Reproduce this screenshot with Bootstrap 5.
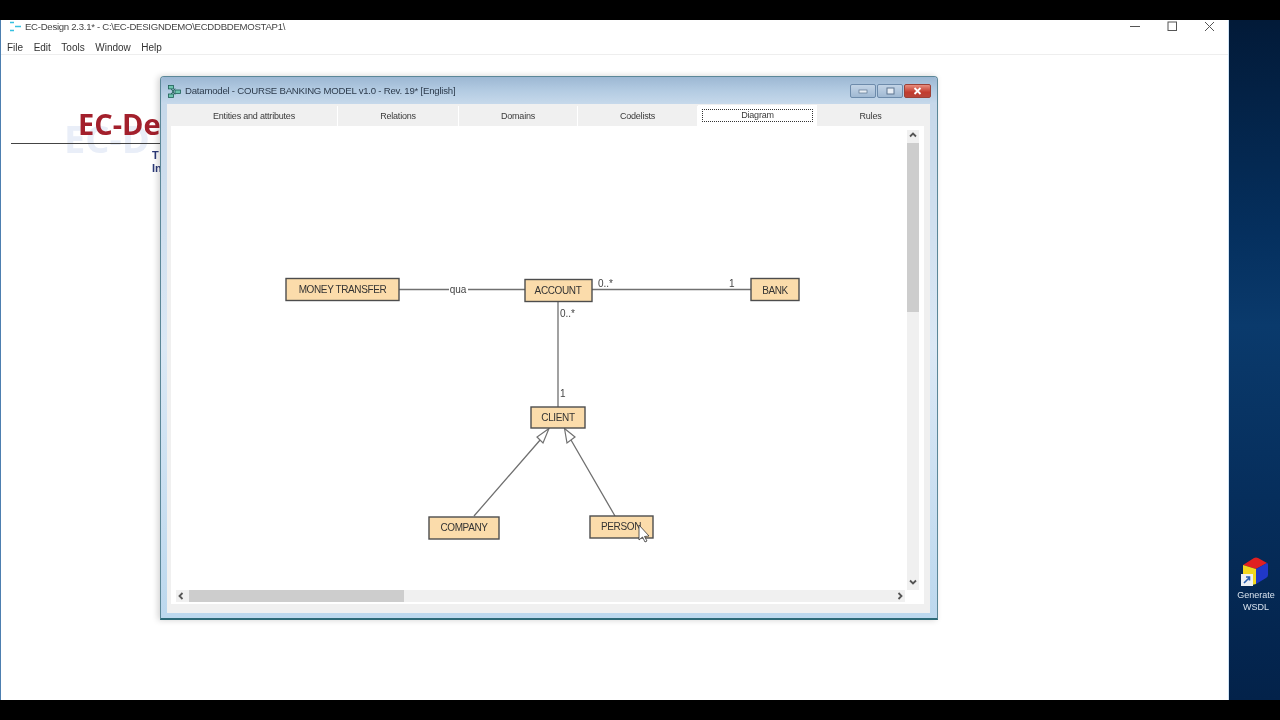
<!DOCTYPE html>
<html lang="en">
<head>
    <meta charset="UTF-8">
    <title>EC-Design</title>
    <link rel="stylesheet" href="https://cdn.jsdelivr.net/npm/bootstrap@5.3.0/dist/css/bootstrap.min.css">
    <style>
        html, body { height: 720px; overflow: hidden; }
        body { background: #000; font-family: "Liberation Sans", Arial, sans-serif; color: #333; }
        .screen { height: 720px; padding: 20px 0; }
        .stage { height: 680px; position: relative; filter: blur(.35px); }
        .app-win { width: 1229px; background: #fff; border-left: 1px solid #4d7fb0; border-right: 1px solid #cfe3f5; }
        .app-title-bar { height: 14px; padding-left: 7px; padding-right: 13px; font-size: 9.6px; letter-spacing: -.28px; line-height: 13px; color: #444; }
        .app-title-bar svg { flex: none; }
        .app-controls { gap: 26px; }
        .menu-wrap { height: 22px; padding-top: 9px; border-bottom: 1px solid #eeeeee; }
        .app-menu { gap: 10.5px; padding-left: 6px; font-size: 10px; line-height: 12px; color: #333; }
        .app-body { position: relative; height: 100%; }
        .logo-red { position: absolute; left: 78px; top: 84px; font-family: "Open Sans", sans-serif; font-weight: 700; font-size: 29px; line-height: 40px; color: #a3202c; white-space: nowrap; }
        .logo-ghost { position: absolute; left: 64px; top: 93px; font-family: "Open Sans", sans-serif; font-weight: 700; font-size: 38px; line-height: 50px; color: #e9eef8; white-space: nowrap; }
        .logo-rule { position: absolute; left: 11px; top: 123px; width: 150px; height: 1px; background: #444; }
        .logo-sub { position: absolute; left: 152px; top: 129px; font-size: 11px; line-height: 13px; font-weight: 700; color: #2c3a78; }
        .desktop { width: 51px; padding-left: 3px; background: linear-gradient(180deg, #021a38 0%, #05305f 32%, #0a3a6c 45%, #062e5c 70%, #03224a 100%); }
        .shortcut { margin-top: 535px; font-size: 9px; line-height: 12px; color: #d8e2ee; text-align: center; }
        .shortcut svg { display: block; margin: 0 0 1px 8px; }

        .dm-window { position: absolute; left: 160px; top: 56px; width: 778px; height: 544px; border: 1px solid #5b8798; border-bottom: 2px solid #2c6a78; border-radius: 4px 4px 0 0; background: linear-gradient(180deg, #c4d6e8 0%, #dbe8f5 50%, #bcd8ee 100%); box-shadow: -2px 0 6px rgba(0,0,0,.18); padding: 0 7px 6px 6px; }
        .dm-title { height: 27px; font-size: 9.6px; letter-spacing: -.22px; color: #2d3b4c; margin: 0 -7px 0 -6px; padding: 2px 6px 0 7px; background: linear-gradient(180deg, #9cb7d3 0%, #b3cbe2 50%, #c7d9eb 100%); border-radius: 3px 3px 0 0; }
        .dm-title svg { flex: none; }
        .ctl-btn { width: 26px; height: 14px; border: 1px solid #6d8bab; border-radius: 2px; background: linear-gradient(180deg, #c3d4e6, #a0b9d3); }
        .ctl-btn.ctl-close { border-color: #9c4036; background: linear-gradient(180deg, #e88e7e, #c23b2e 60%, #b8453a); color: #fff; width: 27px; }
        .ctl-group { gap: 1px; margin-top: -2px; }
        .dm-inner { background: #f0f0f0; padding: 2px 5px 9px 4px; height: 515px; }
        .dm-tabs { height: 20px; font-size: 9px; letter-spacing: -.2px; color: #3a3a3a; }
        .dm-tab { height: 20px; border-right: 1px solid #fff; background: #f0f0f0; text-align: center; line-height: 20px; }
        .tab-a { width: 167px; } .tab-b { width: 121px; } .tab-c { width: 119px; } .tab-d { width: 120px; } .tab-f { width: 107px; border-right: 0; }
        .tab-e { width: 119px; background: #fff; padding: 4px 4px 0; margin-top: -1px; height: 21px; line-height: 11px; border-right: 0; }
        .tab-focus { border: 1px dotted #333; height: 13px; line-height: 10px; }
        .dm-panel { background: #fff; height: 478px; width: 753px; padding: 4px 5px 2px 5px; }
        .sb-v { width: 12px; height: 460px; background: #f0f0f0; }
        .sb-h { width: 729px; height: 12px; background: #f0f0f0; }
        .sb-v-thumb { width: 12px; height: 169px; margin-top: 3px; background: #cdcdcd; }
        .sb-h-thumb { width: 215px; height: 12px; margin-left: 3px; background: #cdcdcd; }
        .sb-btn { flex: none; display: block; }
        .sb-down { margin-bottom: 3px; }
        .canvas { width: 731px; height: 460px; display: block; flex: none; }
        .canvas text { font-family: "Liberation Sans", Arial, sans-serif; font-size: 10px; letter-spacing: -.38px; fill: #333; }
        .canvas .lbl { font-size: 10px; letter-spacing: 0; fill: #444; }
        .canvas .nd { fill: #fbdcab; stroke: #4d4d4d; stroke-width: 1.4; }
        .canvas .ln { stroke: #707070; stroke-width: 1.3; fill: none; }
        .canvas .ar { stroke: #707070; stroke-width: 1.2; fill: #fff; }
    </style>
</head>
<body>
<div class="screen">
    <div class="stage d-flex">
        <div class="app-win d-flex flex-column flex-shrink-0">
            <div class="app-title-bar d-flex align-items-center justify-content-between">
                <div class="d-flex align-items-center gap-1">
                    <svg width="13" height="11" viewBox="0 0 13 11"><path d="M2 1.5h4M7 5.5h6M2 9.5h4" stroke="#35c0e0" stroke-width="1.7" fill="none"/></svg>
                    <span>EC-Design 2.3.1* - C:\EC-DESIGNDEMO\ECDDBDEMOSTAP1\</span>
                </div>
                <div class="d-flex app-controls align-items-center">
                    <svg width="11" height="11" viewBox="0 0 11 11"><path d="M0 5.5h10" stroke="#555" fill="none"/></svg>
                    <svg width="11" height="11" viewBox="0 0 11 11"><rect x="1" y="1" width="8.5" height="8.5" stroke="#555" fill="none"/></svg>
                    <svg width="11" height="11" viewBox="0 0 11 11"><path d="M1 1l9 9M10 1l-9 9" stroke="#555" fill="none"/></svg>
                </div>
            </div>
            <div class="menu-wrap">
                <div class="app-menu d-flex">
                    <span>File</span><span>Edit</span><span>Tools</span><span>Window</span><span>Help</span>
                </div>
            </div>
            <div class="app-body flex-grow-1"></div>
        </div>
        <div class="desktop flex-shrink-0">
            <div class="shortcut">
                <svg width="29" height="33" viewBox="0 0 29 33">
                    <path d="M3 10L14 3q2-1 4 0l9 5-11 6z" fill="#e02020"/>
                    <path d="M3 10l13 4v15l-4 1-8-6q-1-1-1-3z" fill="#f2d820"/>
                    <path d="M16 14l11-6q1 0 1 2v10q0 2-2 3l-10 6z" fill="#2038c8"/>
                    <rect x="1" y="19" width="12" height="12" fill="#eef1f4"/>
                    <path d="M4 28l5-5M6 22h3.5v3.5" stroke="#2a5fb0" stroke-width="1.6" fill="none"/>
                </svg>
                Generate<br>WSDL
            </div>
        </div>

        <div class="logo-ghost">EC-D</div>
        <div class="logo-red">EC-De</div>
        <div class="logo-rule"></div>
        <div class="logo-sub">T<br>In</div>

        <div class="dm-window d-flex flex-column">
            <div class="dm-title d-flex align-items-center justify-content-between flex-shrink-0">
                <div class="d-flex align-items-center gap-1">
                    <svg width="13" height="13" viewBox="0 0 13 13"><path d="M3 3.5L7 9.5M3 9.5L7 3.5" stroke="#1d5f55" fill="none"/><rect x=".5" y=".5" width="5" height="3.4" fill="#6fc4ae" stroke="#1d5f55" stroke-width=".8"/><rect x=".5" y="9" width="5" height="3.4" fill="#6fc4ae" stroke="#1d5f55" stroke-width=".8"/><rect x="7" y="5" width="5.4" height="3.4" fill="#6fc4ae" stroke="#1d5f55" stroke-width=".8"/></svg>
                    <span>Datamodel - COURSE BANKING MODEL v1.0 - Rev. 19* [English]</span>
                </div>
                <div class="d-flex ctl-group">
                    <div class="ctl-btn d-flex align-items-center justify-content-center"><svg width="10" height="6" viewBox="0 0 10 6"><rect x="1" y="2" width="8" height="3" fill="#e8eef5" stroke="#5d7590" stroke-width=".7"/></svg></div>
                    <div class="ctl-btn d-flex align-items-center justify-content-center"><svg width="9" height="8" viewBox="0 0 9 8"><rect x="1" y="1" width="7" height="6" fill="#e8eef5" stroke="#5d7590"/></svg></div>
                    <div class="ctl-btn ctl-close d-flex align-items-center justify-content-center"><svg width="9" height="8" viewBox="0 0 9 8"><path d="M1.5 1l6 6M7.5 1l-6 6" stroke="#fff" stroke-width="1.8" fill="none"/></svg></div>
                </div>
            </div>
            <div class="dm-inner">
                <div class="dm-tabs d-flex">
                    <div class="dm-tab tab-a">Entities and attributes</div>
                    <div class="dm-tab tab-b">Relations</div>
                    <div class="dm-tab tab-c">Domains</div>
                    <div class="dm-tab tab-d">Codelists</div>
                    <div class="dm-tab tab-e"><div class="tab-focus">Diagram</div></div>
                    <div class="dm-tab tab-f">Rules</div>
                </div>
                <div class="dm-panel">
                    <div class="d-flex">
                        <svg class="canvas" viewBox="176 130 731 460">
                            <path class="ln" d="M399 289.5H449M468 289.5H525M592 289.5H751M558 301V407M474 516L541 439M615 516L571 440"/>
                            <path class="ar" d="M549 428.5L537 437L543 443Z"/>
                            <path class="ar" d="M564.5 428.5L567 443L575 437Z"/>
                            <rect class="nd" x="286" y="278.5" width="113" height="22"/>
                            <rect class="nd" x="525" y="279.5" width="67" height="22"/>
                            <rect class="nd" x="751" y="278.5" width="48" height="22"/>
                            <rect class="nd" x="531" y="407" width="54" height="21"/>
                            <rect class="nd" x="429" y="517" width="70" height="22"/>
                            <rect class="nd" x="590" y="516" width="63" height="22"/>
                            <text x="342.5" y="292.5" text-anchor="middle">MONEY TRANSFER</text>
                            <text x="558" y="293.5" text-anchor="middle">ACCOUNT</text>
                            <text x="775" y="293.5" text-anchor="middle">BANK</text>
                            <text x="558" y="421" text-anchor="middle">CLIENT</text>
                            <text x="464" y="531" text-anchor="middle">COMPANY</text>
                            <text x="621" y="530" text-anchor="middle">PERSON</text>
                            <text class="lbl" x="458" y="293" text-anchor="middle">qua</text>
                            <text class="lbl" x="598" y="287">0..*</text>
                            <text class="lbl" x="729" y="287">1</text>
                            <text class="lbl" x="560" y="317">0..*</text>
                            <text class="lbl" x="560" y="397">1</text>
                            <path d="M639 525V540L642.5 537L645 542L647 541L644.5 536.5L649 536Z" fill="#fff" stroke="#333" stroke-width=".8"/>
                        </svg>
                        <div class="sb-v d-flex flex-column justify-content-between">
                            <div>
                                <svg class="sb-btn" width="12" height="10" viewBox="0 0 12 10"><path d="M3 6.5L6 3.5l3 3" stroke="#555" stroke-width="1.8" fill="none"/></svg>
                                <div class="sb-v-thumb"></div>
                            </div>
                            <svg class="sb-btn sb-down" width="12" height="10" viewBox="0 0 12 10"><path d="M3 3.5L6 6.5l3-3" stroke="#555" stroke-width="1.8" fill="none"/></svg>
                        </div>
                    </div>
                    <div class="sb-h d-flex align-items-center">
                        <svg class="sb-btn" width="10" height="12" viewBox="0 0 10 12"><path d="M6.5 3L3.5 6l3 3" stroke="#555" stroke-width="1.8" fill="none"/></svg>
                        <div class="sb-h-thumb"></div>
                        <svg class="sb-btn ms-auto" width="10" height="12" viewBox="0 0 10 12"><path d="M3.5 3L6.5 6l-3 3" stroke="#555" stroke-width="1.8" fill="none"/></svg>
                    </div>
                </div>
            </div>
        </div>
    </div>
</div>
<script src="https://cdn.jsdelivr.net/npm/bootstrap@5.3.0/dist/js/bootstrap.bundle.min.js"></script>
</body>
</html>
